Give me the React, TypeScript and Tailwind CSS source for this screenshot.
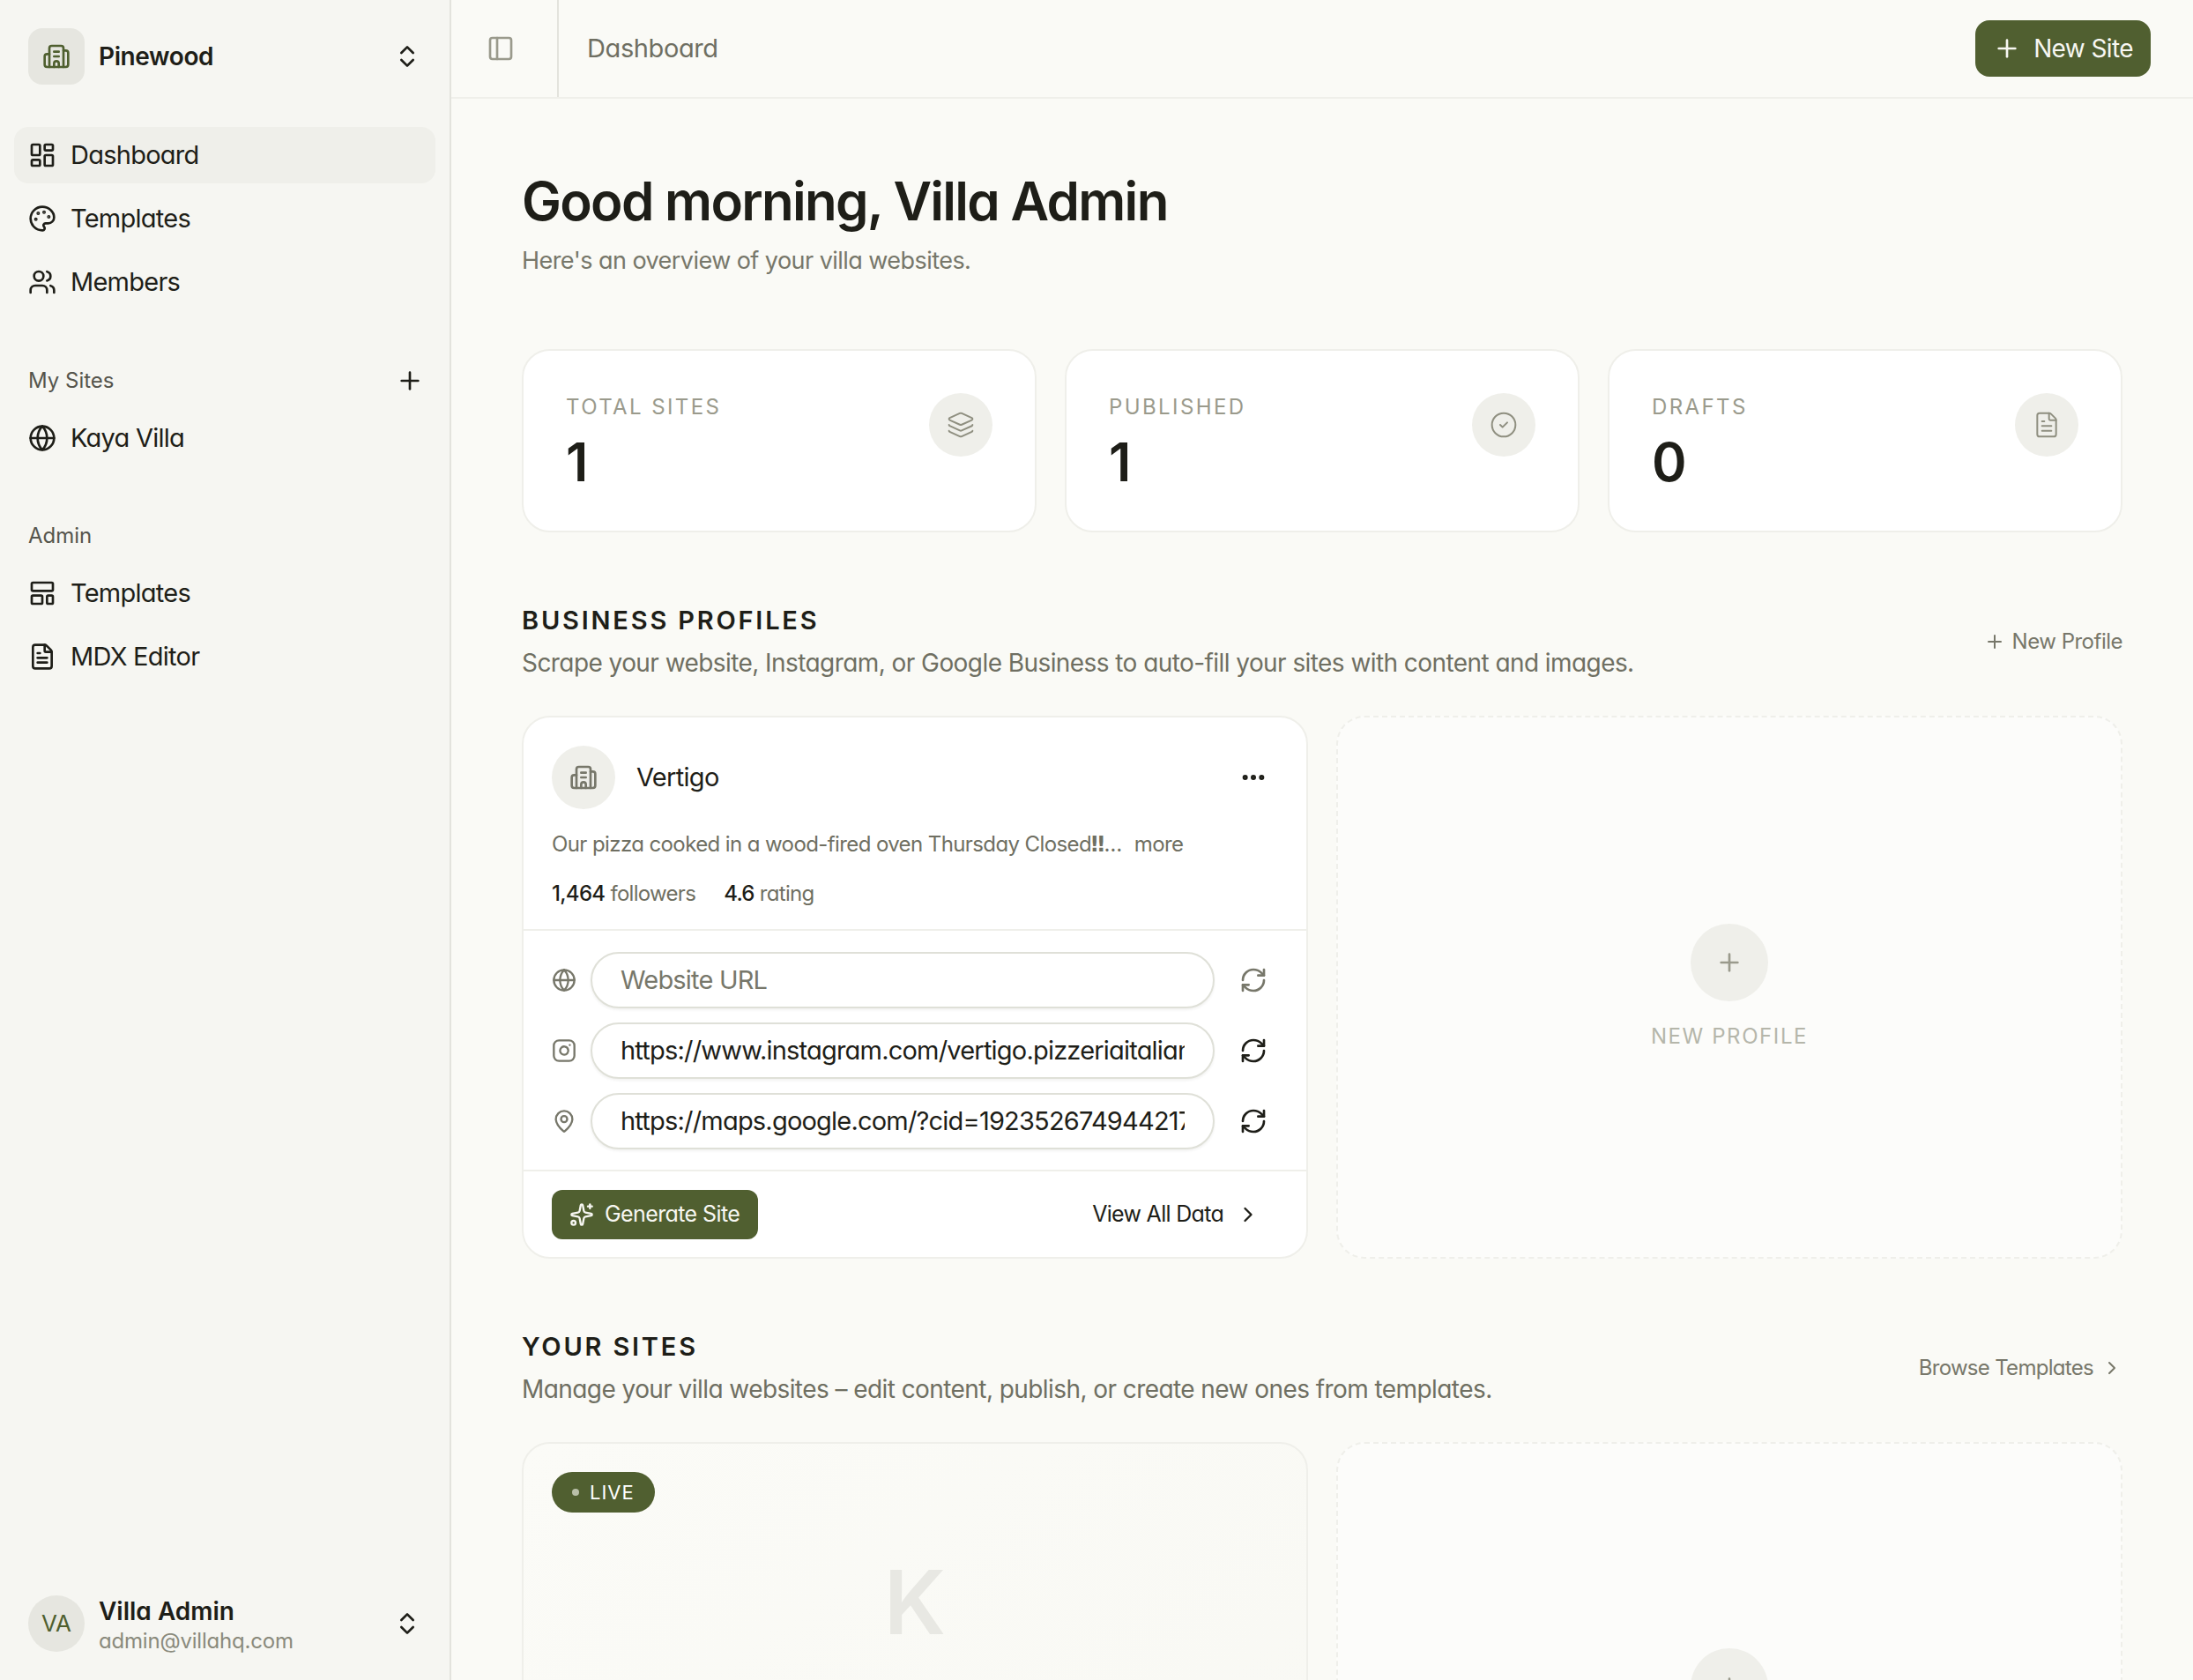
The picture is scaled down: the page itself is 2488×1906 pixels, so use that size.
import {
  Building2,
  ChevronRight,
  ChevronsUpDown,
  CircleCheck,
  Ellipsis,
  FileText,
  Globe,
  Instagram,
  Layers,
  LayoutDashboard,
  LayoutTemplate,
  MapPin,
  Palette,
  PanelLeft,
  Plus,
  RefreshCw,
  Sparkles,
  Users,
} from 'lucide-react';
import type { ReactNode } from 'react';

const bodyFont = "font-['Inter','Liberation_Sans',sans-serif] [font-feature-settings:'cv11']";

function NavItem({ icon, label, active }: { icon: ReactNode; label: string; active?: boolean }) {
  return (
    <div
      className={`flex h-16 items-center gap-4 rounded-2xl px-4 text-[29px] tracking-[-0.75px] text-[#1e1e18] ${
        active ? 'bg-[#efefea]' : ''
      }`}
    >
      {icon}
      <span>{label}</span>
    </div>
  );
}

function StatCard({ label, value, icon }: { label: string; value: string; icon: ReactNode }) {
  return (
    <div className="flex items-start justify-between rounded-[32px] border-2 border-[#efefea] bg-white p-12">
      <div>
        <p className="text-2xl leading-8 tracking-[2.4px] text-[#9a9a8c]">{label}</p>
        <p className="mt-4 text-[60px] leading-[60px] font-semibold text-[#1e1e18]">{value}</p>
      </div>
      <div className="flex h-[72px] w-[72px] items-center justify-center rounded-full bg-[#efefea] text-[#8f8f80]">
        {icon}
      </div>
    </div>
  );
}

function UrlRow({ icon, value, placeholder }: { icon: ReactNode; value?: string; placeholder?: string }) {
  return (
    <div className="flex items-center gap-4">
      {icon}
      <input
        readOnly
        value={value ?? ''}
        placeholder={placeholder}
        className="h-16 min-w-0 flex-1 rounded-full border-2 border-[#dfe0d8] bg-white px-8 text-[29px] tracking-[-0.8px] text-[#1e1e18] shadow-[0_2px_3px_rgba(30,30,24,0.06)] outline-none placeholder:text-[#77776a]"
      />
      <div className={`flex w-14 justify-center ${value ? 'text-[#1e1e18]' : 'text-[#77776a]'}`}>
        <RefreshCw size={32} strokeWidth={2} />
      </div>
    </div>
  );
}

function SectionHead({ title, desc, action }: { title: string; desc: string; action: ReactNode }) {
  return (
    <div className="flex items-center justify-between">
      <div>
        <h2 className="text-[29px] leading-10 font-semibold tracking-[2.8px] text-[#1e1e18]">{title}</h2>
        <p className="mt-2 text-[28px] leading-10 tracking-[-0.57px] text-[#6f6f62]">{desc}</p>
      </div>
      {action}
    </div>
  );
}

function NewCard({ label }: { label: string }) {
  return (
    <div className="flex h-[616px] flex-col items-center justify-center rounded-[32px] border-2 border-dashed border-[#efefea] bg-[#fcfcfa]">
      <div className="flex h-[88px] w-[88px] items-center justify-center rounded-full bg-[#efefea] text-[#9a9a8c]">
        <Plus size={32} strokeWidth={2} />
      </div>
      <p className="mt-6 text-2xl leading-8 tracking-[1.6px] text-[#b5b6aa]">{label}</p>
    </div>
  );
}

export default function App() {
  return (
    <div className={`flex h-screen overflow-hidden bg-[#fafaf6] ${bodyFont}`}>
      <aside className="flex h-full w-[512px] shrink-0 flex-col border-r-2 border-[#e3e3dd] bg-[#f6f6f2]">
        <div className="flex items-center justify-between px-8 pt-8">
          <div className="flex items-center gap-4">
            <div className="flex h-16 w-16 items-center justify-center rounded-2xl bg-[#e6e6e0] text-[#4f5f2f]">
              <Building2 size={32} strokeWidth={2} />
            </div>
            <span className="text-[28px] font-semibold tracking-[-0.4px] text-[#1e1e18]">Pinewood</span>
          </div>
          <ChevronsUpDown size={32} strokeWidth={2} className="text-[#1e1e18]" />
        </div>

        <nav className="mt-12 flex flex-col gap-2 px-4">
          <NavItem active icon={<LayoutDashboard size={32} strokeWidth={2} />} label="Dashboard" />
          <NavItem icon={<Palette size={32} strokeWidth={2} />} label="Templates" />
          <NavItem icon={<Users size={32} strokeWidth={2} />} label="Members" />
        </nav>

        <div className="mt-16 flex items-center justify-between pr-[29px] pl-8 text-[#55554d]">
          <span className="text-2xl leading-8">My Sites</span>
          <Plus size={32} strokeWidth={2} className="text-[#1e1e18]" />
        </div>
        <div className="mt-[17px] px-4">
          <NavItem icon={<Globe size={32} strokeWidth={2} />} label="Kaya Villa" />
        </div>

        <p className="mt-[63px] pl-8 text-2xl leading-8 text-[#55554d]">Admin</p>
        <nav className="mt-[17px] flex flex-col gap-2 px-4">
          <NavItem icon={<LayoutTemplate size={32} strokeWidth={2} />} label="Templates" />
          <NavItem icon={<FileText size={32} strokeWidth={2} />} label="MDX Editor" />
        </nav>

        <div className="mt-auto flex items-center justify-between px-8 pb-7">
          <div className="flex items-center gap-4">
            <div className="flex h-16 w-16 items-center justify-center rounded-full bg-[#e6e6e0] text-[26px] text-[#4f5f2f]">
              VA
            </div>
            <div className="pt-[5px]">
              <p className="text-[28px] leading-9 font-semibold text-[#1e1e18]">Villa Admin</p>
              <p className="text-2xl leading-8 tracking-[-0.2px] text-[#8a8a7c]">admin@villahq.com</p>
            </div>
          </div>
          <ChevronsUpDown size={32} strokeWidth={2} className="text-[#1e1e18]" />
        </div>
      </aside>

      <div className="flex min-w-0 flex-1 flex-col">
        <header className="flex h-[112px] shrink-0 items-center justify-between border-b-2 border-[#efefea] pr-12">
          <div className="flex h-full items-center">
            <div className="flex h-full w-[122px] items-center border-r-2 border-[#e3e3dd] pl-10 text-[#9a9a8c]">
              <PanelLeft size={32} strokeWidth={2} />
            </div>
            <span className="pl-8 text-[29px] tracking-[-0.4px] text-[#6f6f62]">Dashboard</span>
          </div>
          <button className="flex h-16 items-center gap-[14px] rounded-2xl bg-[#505f30] px-5 text-[28px] tracking-[-0.6px] text-[#f7f7f2]">
            <Plus size={32} strokeWidth={2} />
            New Site
          </button>
        </header>

        <main className="min-h-0 flex-1 overflow-hidden px-20 pt-20">
          <h1 className="text-[60px] leading-[72px] font-semibold tracking-[-1.7px] text-[#1e1e18]">
            Good morning, Villa Admin
          </h1>
          <p className="mt-3 text-[27px] leading-10 tracking-[-0.55px] text-[#77776a]">
            Here's an overview of your villa websites.
          </p>

          <div className="mt-20 grid grid-cols-3 gap-8">
            <StatCard label="TOTAL SITES" value="1" icon={<Layers size={32} strokeWidth={1.5} />} />
            <StatCard label="PUBLISHED" value="1" icon={<CircleCheck size={32} strokeWidth={1.5} />} />
            <StatCard label="DRAFTS" value="0" icon={<FileText size={32} strokeWidth={1.5} />} />
          </div>

          <div className="mt-20">
            <SectionHead
              title="BUSINESS PROFILES"
              desc="Scrape your website, Instagram, or Google Business to auto-fill your sites with content and images."
              action={
                <span className="flex items-center gap-2 text-2xl tracking-[-0.5px] text-[#77776a]">
                  <Plus size={24} strokeWidth={2} />
                  New Profile
                </span>
              }
            />
          </div>

          <div className="mt-10 grid grid-cols-2 gap-8">
            <div className="h-[616px] rounded-[32px] border-2 border-[#efefea] bg-white">
              <div className="h-[242px] border-b-2 border-[#efefea] p-8">
                <div className="flex items-center justify-between">
                  <div className="flex items-center gap-6">
                    <div className="flex h-[72px] w-[72px] items-center justify-center rounded-full bg-[#efefea] text-[#77776a]">
                      <Building2 size={32} strokeWidth={2} />
                    </div>
                    <span className="text-[29px] tracking-[-0.7px] text-[#1e1e18]">Vertigo</span>
                  </div>
                  <div className="flex w-14 justify-center text-[#1e1e18]">
                    <Ellipsis size={32} strokeWidth={2.5} />
                  </div>
                </div>
                <p className="mt-[22px] text-2xl leading-9 tracking-[-0.6px] text-[#6f6f62]">
                  Our pizza cooked in a wood-fired oven Thursday Closed
                  <span className="font-['DejaVu_Sans'] font-bold">‼</span>… <span className="ml-2">more</span>
                </p>
                <div className="mt-5 flex gap-8 text-2xl leading-9 tracking-[-0.7px] text-[#6f6f62]">
                  <span>
                    <span className="font-medium text-[#1e1e18]">1,464</span> followers
                  </span>
                  <span>
                    <span className="font-medium text-[#1e1e18]">4.6</span> rating
                  </span>
                </div>
              </div>

              <div className="flex h-[273px] flex-col justify-center gap-4 border-b-2 border-[#efefea] px-8">
                <UrlRow icon={<Globe size={28} strokeWidth={2} className="shrink-0 text-[#77776a]" />} placeholder="Website URL" />
                <UrlRow
                  icon={<Instagram size={28} strokeWidth={2} className="shrink-0 text-[#77776a]" />}
                  value="https://www.instagram.com/vertigo.pizzeriaitaliana"
                />
                <UrlRow
                  icon={<MapPin size={28} strokeWidth={2} className="shrink-0 text-[#77776a]" />}
                  value="https://maps.google.com/?cid=19235267494421780"
                />
              </div>

              <div className="flex h-[97px] items-center justify-between px-8">
                <button className="flex h-14 items-center gap-3 rounded-xl bg-[#505f30] pr-[21px] pl-5 text-[25px] tracking-[-0.6px] text-[#f7f7f2]">
                  <Sparkles size={28} strokeWidth={2} />
                  Generate Site
                </button>
                <span className="flex items-center gap-[14px] pr-5 text-[25px] tracking-[-0.7px] text-[#1e1e18]">
                  View All Data
                  <ChevronRight size={28} strokeWidth={2} />
                </span>
              </div>
            </div>
            <NewCard label="NEW PROFILE" />
          </div>

          <div className="mt-20">
            <SectionHead
              title="YOUR SITES"
              desc="Manage your villa websites – edit content, publish, or create new ones from templates."
              action={
                <span className="flex items-center gap-[9px] text-2xl tracking-[-0.7px] text-[#77776a]">
                  Browse Templates
                  <ChevronRight size={24} strokeWidth={2} />
                </span>
              }
            />
          </div>

          <div className="mt-10 grid grid-cols-2 gap-8">
            <div className="relative flex h-[616px] justify-center rounded-[32px] border-2 border-[#efefea] bg-gradient-to-br from-[#fbfbf7] to-[#f8f8f3] pt-[130px]">
              <span className="absolute top-8 left-8 flex h-[46px] items-center gap-3 rounded-full bg-[#505f30] px-[23px] text-[22px] tracking-[1px] text-white">
                <span className="h-2 w-2 rounded-full bg-[#b9bfa8]" />
                LIVE
              </span>
              <span className="text-[100px] leading-[100px] font-semibold text-[#e8e8e3]">K</span>
            </div>
            <div className="flex h-[616px] flex-col items-center rounded-[32px] border-2 border-dashed border-[#efefea] bg-[#fcfcfa] pt-[232px]">
              <div className="flex h-[88px] w-[88px] items-center justify-center rounded-full bg-[#efefea] text-[#9a9a8c]">
                <Plus size={32} strokeWidth={2} />
              </div>
            </div>
          </div>
        </main>
      </div>
    </div>
  );
}
